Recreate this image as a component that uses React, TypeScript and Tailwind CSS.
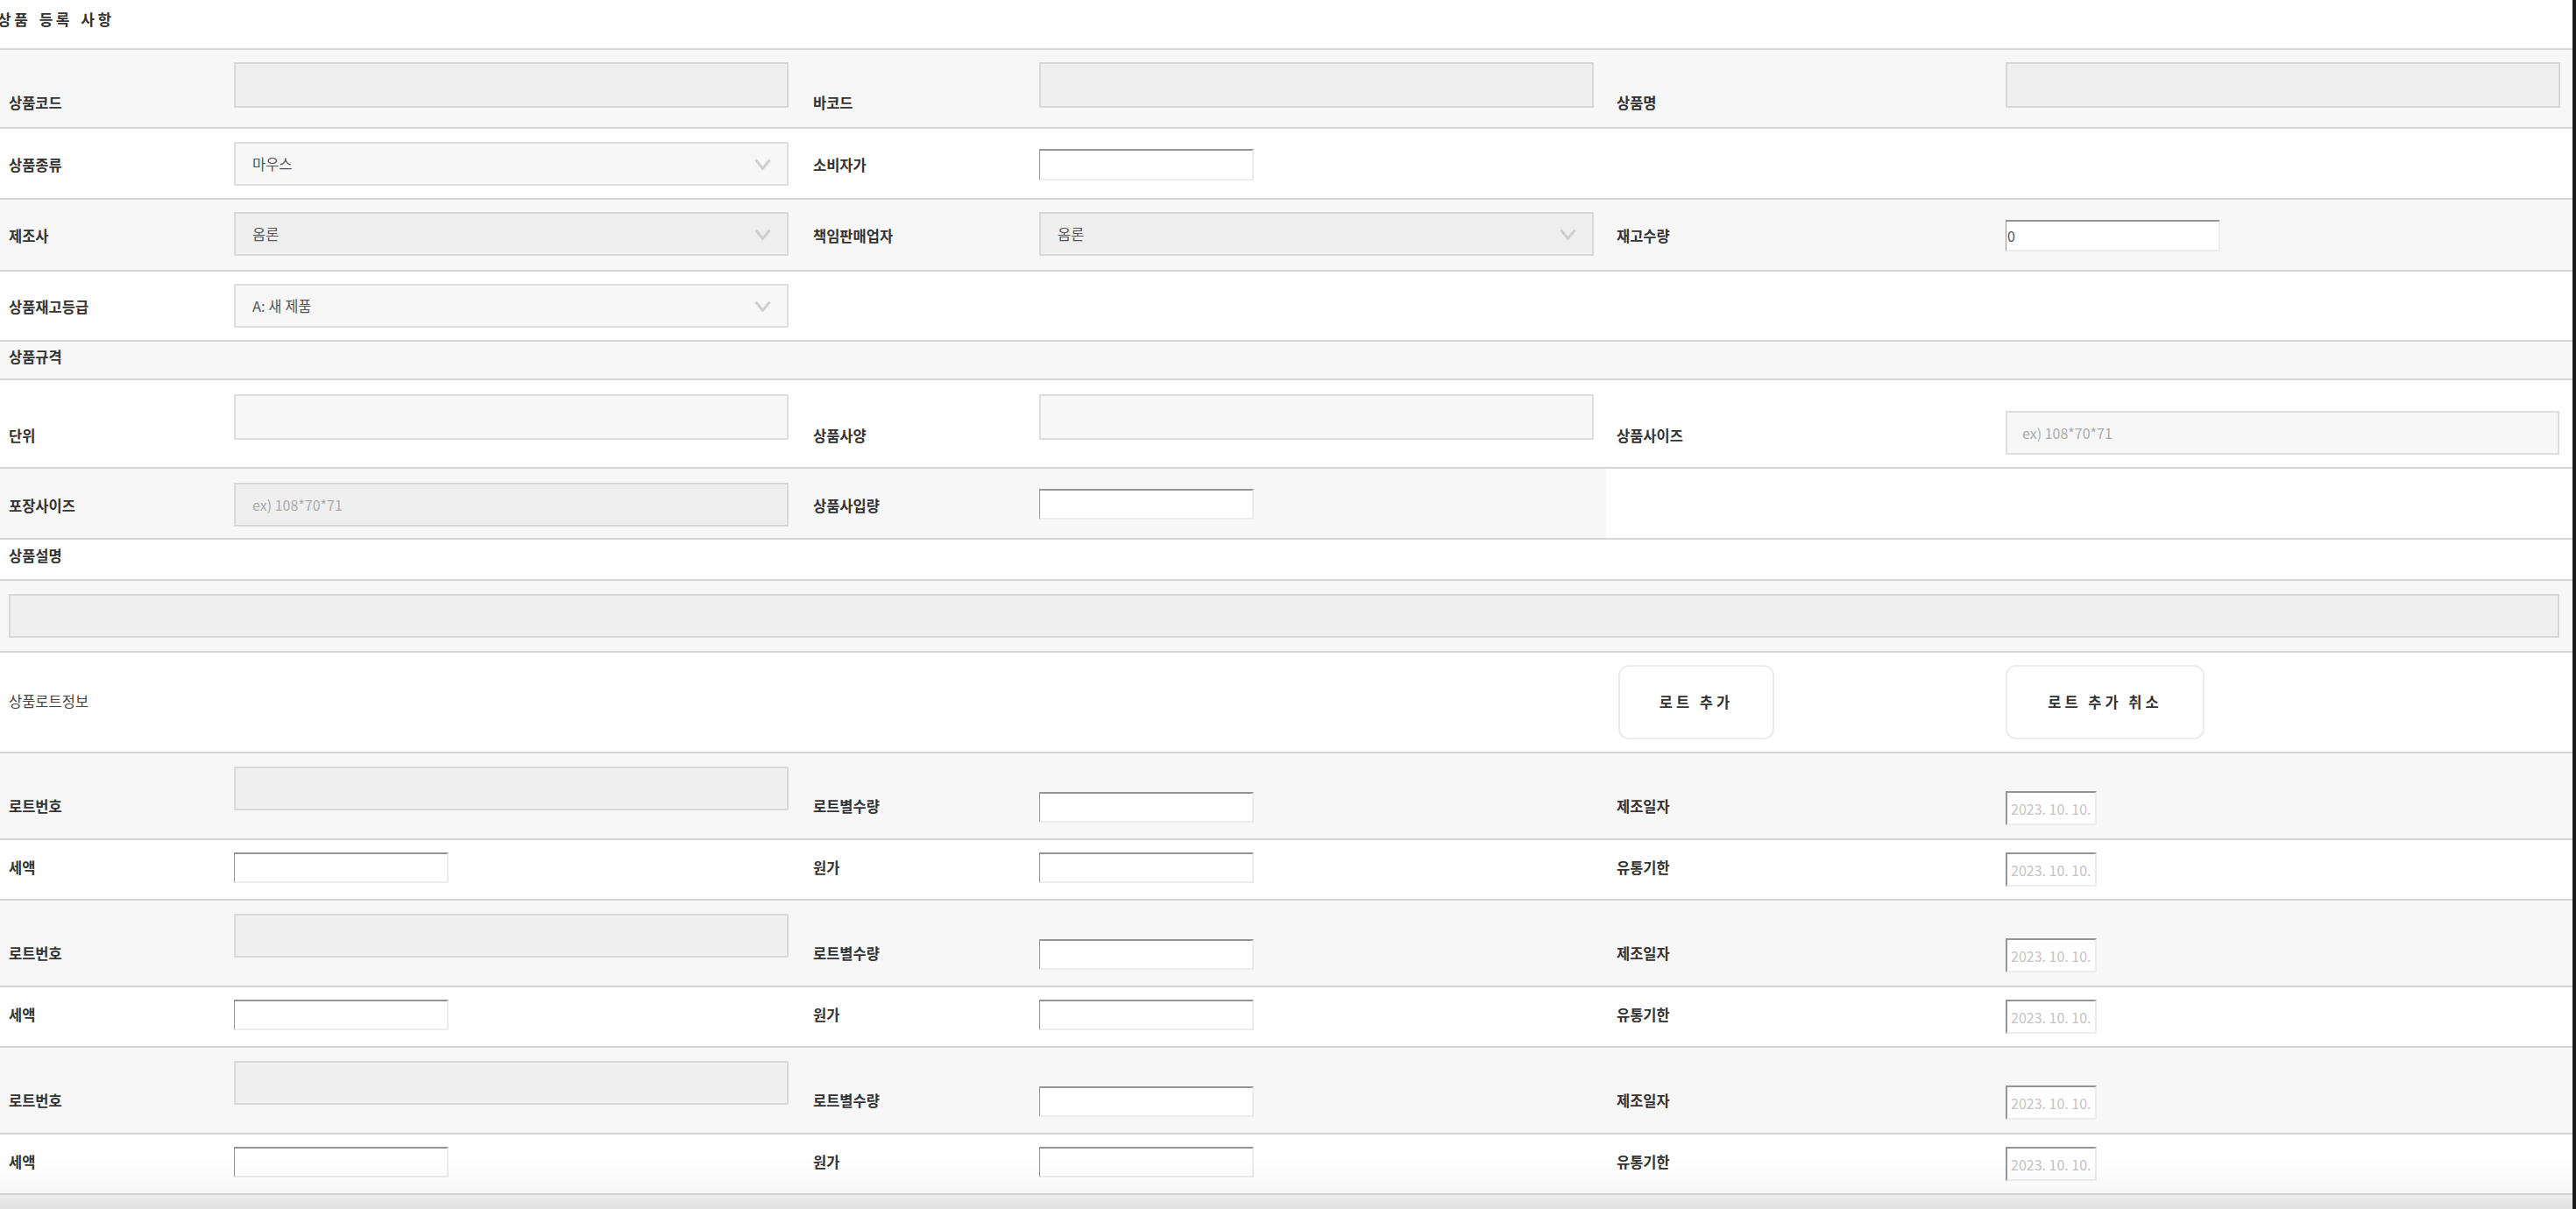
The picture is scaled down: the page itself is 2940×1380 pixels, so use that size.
import React from "react";

const LB = "shrink-0 pl-[10px] text-[16.5px] leading-[20px] font-bold text-[#333] whitespace-nowrap";
const ROW = "flex border-b-2 border-[#d4d4d4]";

function Chevron() {
  return (
    <svg width="19" height="13" viewBox="0 0 19 13" className="shrink-0">
      <polyline points="1.5,1.5 9.5,11.5 17.5,1.5" fill="none" stroke="#cfcfcf" strokeWidth="3" />
    </svg>
  );
}

function SelectBox({ text, dark }: { text: string; dark?: boolean }) {
  return (
    <div
      className={
        dark
          ? "flex items-center justify-between w-[633px] h-[50px] border-2 border-[#d9d9d9] bg-[#efefef] pl-[19px] pr-[18px] text-[16.5px] text-[#555]"
          : "flex items-center justify-between w-[633px] h-[50px] border-2 border-[#dedede] bg-[#f7f7f7] pl-[19px] pr-[18px] text-[16.5px] text-[#555]"
      }
    >
      <span>{text}</span>
      <Chevron />
    </div>
  );
}

function WhiteInput({ value, w = "w-[245px]", h = "h-[36px]" }: { value?: string; w?: string; h?: string }) {
  return (
    <div
      className={`${w} ${h} bg-white border-t-2 border-l border-r-2 border-b-2 border-t-[#959595] border-l-[#959595] border-r-[#ececec] border-b-[#ececec] flex items-center text-[16px] text-[#555] pl-[1px]`}
    >
      {value}
    </div>
  );
}

function DateInput() {
  return (
    <div className="w-[104px] h-[39px] bg-white border-t-2 border-l-2 border-r-2 border-b-2 border-t-[#959595] border-l-[#959595] border-r-[#ececec] border-b-[#ececec] flex items-center overflow-hidden whitespace-nowrap text-[16px] text-[#c4c4c4] pl-[4px]">
      2023. 10. 10.
    </div>
  );
}

function Area({ light, tall }: { light?: boolean; tall?: boolean }) {
  return (
    <div
      className={
        light
          ? `w-[633px] ${tall ? "h-[52px]" : "h-[50px]"} border-2 border-[#dedede] bg-[#f7f7f7]`
          : `w-[633px] ${tall ? "h-[52px]" : "h-[50px]"} border-2 border-[#d8d8d8] bg-[#efefef]`
      }
    />
  );
}

function LotRows() {
  return (
    <>
      <div className={`${ROW} h-[99px] bg-[#f7f7f7]`}>
        <div className={`${LB} w-[258px] pt-[50px]`}>로트번호</div>
        <div className="w-[660px] shrink-0 pl-[9px] pt-[15px]">
          <Area />
        </div>
        <div className={`${LB} w-[258px] pt-[50px]`}>로트별수량</div>
        <div className="w-[657px] shrink-0 pl-[10px] pt-[44px]">
          <WhiteInput h="h-[35px]" />
        </div>
        <div className={`${LB} w-[446px] pl-[12px] pt-[50px]`}>제조일자</div>
        <div className="flex-1 pl-[10px] pt-[43px]">
          <DateInput />
        </div>
      </div>
      <div className={`${ROW} h-[69px] bg-white`}>
        <div className={`${LB} w-[258px] pt-[21px]`}>세액</div>
        <div className="w-[660px] shrink-0 pl-[9px] pt-[14px]">
          <WhiteInput h="h-[35px]" />
        </div>
        <div className={`${LB} w-[258px] pt-[21px]`}>원가</div>
        <div className="w-[657px] shrink-0 pl-[10px] pt-[14px]">
          <WhiteInput h="h-[35px]" />
        </div>
        <div className={`${LB} w-[446px] pl-[12px] pt-[21px]`}>유통기한</div>
        <div className="flex-1 pl-[10px] pt-[14px]">
          <DateInput />
        </div>
      </div>
    </>
  );
}

export default function App() {
  return (
    <div className="w-[2940px] h-[1380px] overflow-hidden bg-white border-r-4 border-[#1a1a1a] font-['Noto_Sans_CJK_KR','Noto_Sans',sans-serif] relative">
      {/* title */}
      <div className="h-[57px] border-b-2 border-[#d9d9d9] pt-[12px] -ml-[3px] text-[17px] leading-[20px] font-bold tracking-[3.5px] [word-spacing:2px] text-[#333]">
        상품 등록 사항
      </div>

      {/* row 1 */}
      <div className={`${ROW} h-[90px] bg-[#f7f7f7]`}>
        <div className={`${LB} w-[258px] pt-[50px]`}>상품코드</div>
        <div className="w-[660px] shrink-0 pl-[9px] pt-[14px]">
          <Area tall />
        </div>
        <div className={`${LB} w-[258px] pt-[50px]`}>바코드</div>
        <div className="w-[657px] shrink-0 pl-[10px] pt-[14px]">
          <Area tall />
        </div>
        <div className={`${LB} w-[446px] pl-[12px] pt-[50px]`}>상품명</div>
        <div className="flex-1 pl-[10px] pt-[14px]">
          <Area tall />
        </div>
      </div>

      {/* row 2 */}
      <div className={`${ROW} h-[81px] bg-white`}>
        <div className={`${LB} w-[258px] pt-[31px]`}>상품종류</div>
        <div className="w-[660px] shrink-0 pl-[9px] pt-[15px]">
          <SelectBox text="마우스" />
        </div>
        <div className={`${LB} w-[258px] pt-[31px]`}>소비자가</div>
        <div className="w-[657px] shrink-0 pl-[10px] pt-[23px]">
          <WhiteInput />
        </div>
        <div className="flex-1" />
      </div>

      {/* row 3 */}
      <div className={`${ROW} h-[82px] bg-[#f7f7f7]`}>
        <div className={`${LB} w-[258px] pt-[31px]`}>제조사</div>
        <div className="w-[660px] shrink-0 pl-[9px] pt-[14px]">
          <SelectBox text="옴론" dark />
        </div>
        <div className={`${LB} w-[258px] pt-[31px]`}>책임판매업자</div>
        <div className="w-[657px] shrink-0 pl-[10px] pt-[14px]">
          <SelectBox text="옴론" dark />
        </div>
        <div className={`${LB} w-[446px] pl-[12px] pt-[31px]`}>재고수량</div>
        <div className="flex-1 pl-[10px] pt-[23px]">
          <WhiteInput value="0" />
        </div>
      </div>

      {/* row 4 */}
      <div className={`${ROW} h-[80px] bg-white`}>
        <div className={`${LB} w-[258px] pt-[30px]`}>상품재고등급</div>
        <div className="w-[660px] shrink-0 pl-[9px] pt-[14px]">
          <SelectBox text="A: 새 제품" />
        </div>
        <div className="flex-1" />
      </div>

      {/* 상품규격 */}
      <div className={`${ROW} h-[44px] bg-[#f7f7f7]`}>
        <div className={`${LB} pt-[7px]`}>상품규격</div>
      </div>

      {/* 단위 */}
      <div className={`${ROW} h-[101px] bg-white`}>
        <div className={`${LB} w-[258px] pt-[53px]`}>단위</div>
        <div className="w-[660px] shrink-0 pl-[9px] pt-[16px]">
          <Area light tall />
        </div>
        <div className={`${LB} w-[258px] pt-[53px]`}>상품사양</div>
        <div className="w-[657px] shrink-0 pl-[10px] pt-[16px]">
          <Area light tall />
        </div>
        <div className={`${LB} w-[446px] pl-[12px] pt-[53px]`}>상품사이즈</div>
        <div className="flex-1 pl-[10px] pt-[35px]">
          <div className="w-[632px] h-[50px] border-2 border-[#dedede] bg-[#f7f7f7] flex items-center pl-[17px] text-[16px] text-[#aaa]">
            ex) 108*70*71
          </div>
        </div>
      </div>

      {/* 포장사이즈 */}
      <div className={`${ROW} h-[81px] bg-white`}>
        <div className={`${LB} w-[258px] pt-[32px] bg-[#f7f7f7]`}>포장사이즈</div>
        <div className="w-[660px] shrink-0 pl-[9px] pt-[16px] bg-[#f7f7f7]">
          <div className="w-[633px] h-[50px] border-2 border-[#d8d8d8] bg-[#efefef] flex items-center pl-[19px] text-[16px] text-[#aaa]">
            ex) 108*70*71
          </div>
        </div>
        <div className={`${LB} w-[258px] pt-[32px] bg-[#f7f7f7]`}>상품사입량</div>
        <div className="w-[657px] shrink-0 pl-[10px] pt-[23px] bg-[#f7f7f7]">
          <WhiteInput h="h-[35px]" />
        </div>
        <div className="flex-1" />
      </div>

      {/* 상품설명 */}
      <div className={`${ROW} h-[47px] bg-white`}>
        <div className={`${LB} pt-[8px]`}>상품설명</div>
      </div>
      <div className={`${ROW} h-[82px] bg-[#f7f7f7] pl-[10px] pr-[15px] pt-[15px]`}>
        <div className="flex-1 h-[50px] border-2 border-[#d8d8d8] bg-[#efefef]" />
      </div>

      {/* 상품로트정보 */}
      <div className={`${ROW} h-[115px] bg-white`}>
        <div className="w-[1833px] shrink-0 pl-[10px] pt-[45px] text-[16.5px] leading-[20px] text-[#444]">상품로트정보</div>
        <div className="w-[446px] shrink-0 pl-[14px] pt-[14px]">
          <button className="w-[178px] h-[85px] rounded-[12px] border-2 border-[#ececec] bg-white text-[16.5px] font-bold tracking-[0.24em] text-[#333]">
            로트 추가
          </button>
        </div>
        <div className="flex-1 pl-[10px] pt-[14px]">
          <button className="w-[227px] h-[85px] rounded-[12px] border-2 border-[#ececec] bg-white text-[16.5px] font-bold tracking-[0.24em] text-[#333]">
            로트 추가 취소
          </button>
        </div>
      </div>

      <LotRows />
      <LotRows />
      <LotRows />

      <div className="h-[16px] bg-gradient-to-b from-[#f4f4f4] to-[#e9e9e9]" />
      <div className="pointer-events-none absolute left-0 right-0 bottom-0 h-[60px] bg-gradient-to-t from-[rgba(0,0,0,0.04)] to-transparent" />
    </div>
  );
}
